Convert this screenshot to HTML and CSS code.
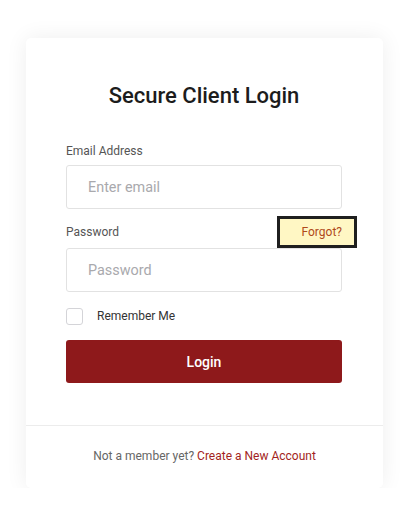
FILE: index.html
```html
<!DOCTYPE html>
<html lang="en">
<head>
    <meta charset="UTF-8">
    <meta name="viewport" content="width=device-width, initial-scale=1.0">
    <title>Secure Client Login</title>
    <link rel="stylesheet" href="styles.css">
</head>
<body>
    <div class="card">
        <form class="card-body" id="login-form">
            <h1>Secure Client Login</h1>

            <label class="field-label" for="email">Email Address</label>
            <input type="email" id="email" class="field" placeholder="Enter email">

            <div class="label-row">
                <label class="field-label" for="password">Password</label>
                <a href="#" class="forgot">Forgot?</a>
            </div>
            <input type="password" id="password" class="field" placeholder="Password">

            <label class="remember">
                <input type="checkbox" class="check">
                <span>Remember Me</span>
            </label>

            <button type="submit" class="login-button">Login</button>
        </form>
        <div class="card-footer">
            Not a member yet? <a href="#" class="signup">Create a New Account</a>
        </div>
    </div>
</body>
</html>
```

FILE: styles.css
```css
body {
    margin: 0;
    padding: 0;
    background: #ffffff;
    font-family: Roboto, 'Liberation Sans', sans-serif;
    color: #222222;
}

.card {
    width: 357px;
    margin: 38px 0 0 26px;
    background: #ffffff;
    border-radius: 5px;
    box-shadow: 0 0 22px rgba(0, 0, 0, 0.07);
}

.card-body {
    display: flex;
    flex-direction: column;
    padding: 44px 41px 42px 40px;
    border-bottom: 1px solid #ececec;
}

h1 {
    margin: 0 0 32px;
    font-size: 22px;
    line-height: 28px;
    font-weight: 500;
    text-align: center;
    color: #1c1c1c;
}

.field-label {
    font-size: 12px;
    line-height: 18px;
    color: #555555;
}

.field {
    box-sizing: border-box;
    width: 100%;
    height: 44px;
    margin-top: 5px;
    padding: 0 21px;
    border: 1px solid #e2e2e2;
    border-radius: 3px;
    font-family: inherit;
    font-size: 14.4px;
    color: #333333;
    outline: none;
}

.field::placeholder {
    color: #a9a9ad;
}

.label-row {
    display: flex;
    justify-content: space-between;
    align-items: center;
    margin-top: 14px;
}

.label-row + .field {
    margin-top: 7px;
}

.forgot {
    display: inline-block;
    padding: 4px 12px 4px 22px;
    margin: -4px -12px -4px 0;
    font-size: 12px;
    line-height: 18px;
    color: #b0491b;
    text-decoration: none;
    background: #fff7c4;
    outline: 3px solid #1f1f1f;
}

.remember {
    display: flex;
    align-items: center;
    gap: 14px;
    margin-top: 15px;
    font-size: 12px;
    line-height: 18px;
    color: #333333;
}

.check {
    appearance: none;
    box-sizing: border-box;
    width: 17px;
    height: 17px;
    margin: 0;
    border: 1px solid #d4d4d8;
    border-radius: 3px;
    background: #ffffff;
}

.login-button {
    height: 43px;
    margin-top: 15px;
    border: none;
    border-radius: 3px;
    background: #8e191b;
    color: #ffffff;
    font-family: inherit;
    font-size: 14px;
    font-weight: 500;
    cursor: pointer;
}

.card-footer {
    padding: 21px 0 23px;
    text-align: center;
    font-size: 12px;
    line-height: 18px;
    color: #666666;
}

.signup {
    color: #a31f22;
    text-decoration: none;
}
```
